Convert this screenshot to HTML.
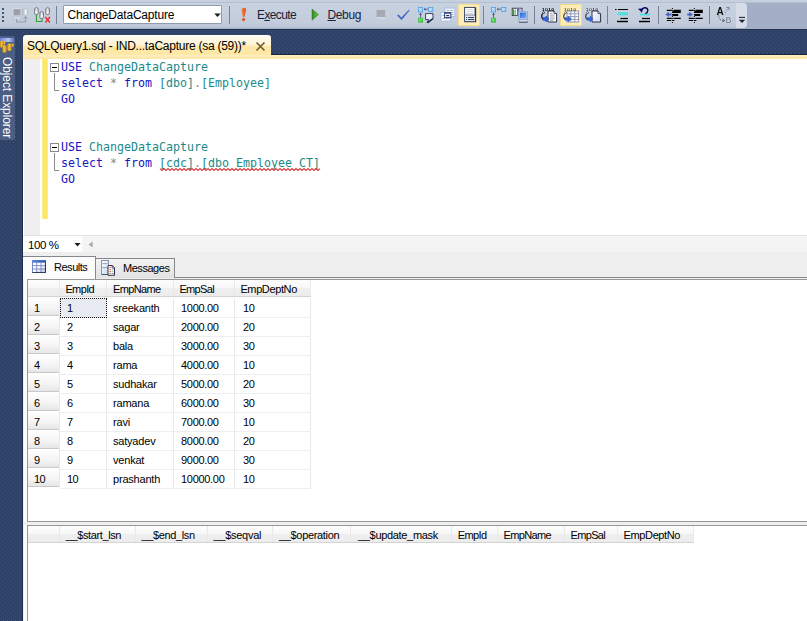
<!DOCTYPE html>
<html>
<head>
<meta charset="utf-8">
<title>SQLQuery1.sql</title>
<style>
html,body{margin:0;padding:0;}
body{width:807px;height:621px;overflow:hidden;position:relative;background:#fff;font-family:"Liberation Sans",sans-serif;font-size:12px;color:#000;}
.abs{position:absolute;}
#shelf{left:0;top:0;width:807px;height:29px;background:#a2afc7;}
#shelftop{left:0;top:0;width:807px;height:3px;background:linear-gradient(#c6cfdd,#c6cfdd 66%,#b4bfd1 67%);}
#toolbar{left:0;top:3px;width:747px;height:25px;background:linear-gradient(#c9d2df,#c2ccdb 80%,#b7c2d4);border-radius:0 4px 4px 0;}
#overflow{left:736px;top:3px;width:11px;height:25px;background:#d7dde8;border-radius:0 4px 4px 0;}
#navy{left:0;top:29px;width:807px;height:592px;background:#2e4268;}
#oe{left:0;top:36px;width:15px;height:104px;background:#4b5e83;border-radius:0 2px 2px 0;}
#oetext{left:-43px;top:100px;letter-spacing:-0.1px;width:100px;height:14px;line-height:14px;color:#fff;font-size:12px;transform:rotate(90deg);white-space:nowrap;text-align:left;}
#doctab{left:23px;top:35px;width:248px;height:21px;border-radius:3px 3px 0 0;background:linear-gradient(#fffdf6,#fff3cf 50%,#ffe8a6 52%,#ffe8a6);}
#tabstrip{left:23px;top:55px;width:784px;height:4px;background:linear-gradient(#fdefc2,#fbe4a6);}
#editor{left:23px;top:59px;width:784px;height:176px;background:#fff;}
#margin{left:24px;top:59px;width:16px;height:176px;background:#efeff1;}
#chg{left:42px;top:59px;width:6px;height:160px;background:linear-gradient(90deg,#fdf0a0,#fce968 18%,#fce968 82%,#fdf0a0);}
.code{font-family:"DejaVu Sans Mono","Liberation Mono",monospace;font-size:11.63px;line-height:16px;white-space:pre;height:16px;left:61px;}
.kw{color:#1515c4;}.id{color:#1a8a8a;}.op{color:#8a8a8a;}
.sq{}
#zoombar{left:23px;top:235px;width:784px;height:17px;background:#f4f4f4;border-top:1px solid #e2e2e2;box-sizing:border-box;}
#zoomcombo{left:23px;top:236px;width:59px;height:16px;background:#fff;}
#lowbg{left:23px;top:252px;width:784px;height:369px;background:#efefef;}
.g{font-size:11px;line-height:13px;white-space:nowrap;letter-spacing:-0.3px;}

.tb{font-size:12px;line-height:14px;white-space:nowrap;color:#1b2236;}
.sep{width:1px;height:18px;top:6px;background:#8591a8;box-shadow:1px 0 0 #d6dde9;}
.hl{background:#fdedb9;border:1px solid #f6da92;box-sizing:border-box;border-radius:1px;}
#combo{left:63px;top:5px;width:159px;height:19px;background:#fff;border:1px solid #909bb0;box-sizing:border-box;border-radius:1px;}
.rtab{box-sizing:border-box;border:1px solid #85878c;border-bottom:none;}
.grid{background:#fff;}
.hdr{background:#f5f5f5;}
.vl{width:1px;background:#e9e9e9;}
.hln{height:1px;background:#eeeeee;}
.hc{background:linear-gradient(#fdfdfd,#f7f7f7 50%,#efefef 51%,#ececec);}
.rh{background:linear-gradient(#fefefe,#f4f4f4 60%,#e6e6e6);border-bottom:1px solid #c9c9c9;box-sizing:content-box;height:17px !important;}
</style>
</head>
<body>
<div id="shelf" class="abs"></div>
<div id="shelftop" class="abs"></div>
<div id="toolbar" class="abs"></div>
<div id="overflow" class="abs"></div>
<div id="navy" class="abs"></div>
<svg class="abs" style="left:0;top:29px" width="807" height="592"><defs><pattern id="dots" width="4" height="4" patternUnits="userSpaceOnUse"><rect width="4" height="4" fill="#2e4268"/><rect x="1" y="1" width="1" height="1" fill="#3e537d"/><rect x="3" y="3" width="1" height="1" fill="#3e537d"/></pattern></defs><rect width="807" height="592" fill="url(#dots)"/><rect width="807" height="1" fill="#22314f"/><rect x="271" y="25" width="536" height="1" fill="#1c2437"/><rect x="22" y="30" width="1" height="562" fill="#1f2c47"/></svg>
<div id="oe" class="abs"></div>
<svg class="abs" style="left:0;top:36px" width="16" height="20" viewBox="0 0 16 20">
<defs><linearGradient id="gbar" x1="0" y1="0" x2="1" y2="0"><stop offset="0" stop-color="#6a82da"/><stop offset="0.6" stop-color="#b6c6f0"/><stop offset="1" stop-color="#5c6ed0"/></linearGradient>
<linearGradient id="ggold" x1="0" y1="0" x2="1" y2="0"><stop offset="0" stop-color="#c88a14"/><stop offset="0.5" stop-color="#f2c04a"/><stop offset="1" stop-color="#c48612"/></linearGradient></defs>
<rect x="0" y="2" width="14" height="4" fill="url(#gbar)"/>
<rect x="3.4" y="5" width="1.8" height="3.4" rx="0.6" fill="#e8c25a"/>
<rect x="11.4" y="7.4" width="2.2" height="3.4" rx="0.7" fill="#e8b840"/>
<rect x="0" y="4.8" width="3.4" height="6.6" rx="1" fill="url(#ggold)"/>
<rect x="7.2" y="7.6" width="4.4" height="7.2" rx="1.2" fill="url(#ggold)"/>
<rect x="2.4" y="9.2" width="4.2" height="7.4" rx="1.2" fill="url(#ggold)"/>
</svg>
<div id="oetext" class="abs">Object Explorer</div>
<div id="doctab" class="abs"></div>
<div id="tabstrip" class="abs"></div>
<div id="editor" class="abs"></div>
<div id="margin" class="abs"></div>
<div id="chg" class="abs"></div>
<div id="zoombar" class="abs"></div>
<div id="zoomcombo" class="abs"></div>
<div id="lowbg" class="abs"></div>
<div id="combo" class="abs"></div>
<div class="abs tb" style="left:67.5px;top:8px;letter-spacing:-0.2px;color:#000;">ChangeDataCapture</div>
<svg class="abs" style="left:214px;top:13px" width="7" height="4"><path d="M0.3 0.6 L6.7 0.6 L3.5 3.9 Z" fill="#1b1b1b"/></svg>
<div class="abs tb" style="left:257px;top:8px;letter-spacing:-0.63px;" id="t_exec">E<u>x</u>ecute</div>
<div class="abs tb" style="left:327.5px;top:8px;letter-spacing:-0.38px;" id="t_debug"><u>D</u>ebug</div>
<div class="abs hl" style="left:458px;top:4px;width:22px;height:22px;"></div>
<div class="abs hl" style="left:560px;top:4px;width:22px;height:22px;"></div>
<svg class="abs" style="left:0;top:0;will-change:transform" width="807" height="29" viewBox="0 0 807 29">
<defs>
<linearGradient id="gb" x1="0" y1="0" x2="1" y2="1"><stop offset="0" stop-color="#d6ecff"/><stop offset="1" stop-color="#8cc4f4"/></linearGradient>
<linearGradient id="gg" x1="0" y1="0" x2="1" y2="1"><stop offset="0" stop-color="#8cf08c"/><stop offset="1" stop-color="#38c838"/></linearGradient>
<linearGradient id="gex" x1="0" y1="0" x2="1" y2="0"><stop offset="0" stop-color="#f39a6a"/><stop offset="0.5" stop-color="#ea6a30"/><stop offset="1" stop-color="#d8501c"/></linearGradient>
<linearGradient id="gplay" x1="0" y1="0" x2="1" y2="0"><stop offset="0" stop-color="#2e8a1e"/><stop offset="1" stop-color="#6cc84c"/></linearGradient>
<linearGradient id="gmon" x1="0" y1="0" x2="1" y2="1"><stop offset="0" stop-color="#2a62d6"/><stop offset="1" stop-color="#6ab0f6"/></linearGradient>
<linearGradient id="gdoc" x1="0" y1="0" x2="1" y2="1"><stop offset="0" stop-color="#ffffff"/><stop offset="1" stop-color="#cfdcf2"/></linearGradient>
<g id="cyl"><path d="M0.4 1.5 Q0.4 0.4 2.1 0.4 Q3.8 0.4 3.8 1.5 V6 Q3.8 7.1 2.1 7.1 Q0.4 7.1 0.4 6 Z" fill="#fff" stroke="#50525e" stroke-width="0.8"/><path d="M0.8 2.4 Q2.1 3.2 3.4 2.4" fill="none" stroke="#9a9caa" stroke-width="0.7"/></g>
<g id="plan">
 <rect x="0.4" y="0.4" width="4.2" height="4.6" fill="url(#gb)" stroke="#4f9ee6" stroke-width="0.8"/>
 <rect x="10.6" y="0.4" width="4.2" height="4" fill="url(#gb)" stroke="#4f9ee6" stroke-width="0.8"/>
 <rect x="0.4" y="11.2" width="4.2" height="4" fill="url(#gg)" stroke="#3cbc3c" stroke-width="0.8"/>
 <path d="M6.2 2.2 H10 M6.2 2.2 l1.3 -1.2 M6.2 2.2 l1.3 1.2" stroke="#343e68" stroke-width="0.75" fill="none"/>
 <path d="M2.5 10.6 V6.4 M2.5 6.4 l-1.3 1.4 M2.5 6.4 l1.3 1.4" stroke="#343e68" stroke-width="0.75" fill="none"/>
</g>
<g id="arrow1010">
 <text x="1" y="3.5" font-family="Liberation Sans, sans-serif" font-size="4.4" fill="#000" letter-spacing="0.75">1010</text>
 <circle cx="2.6" cy="5.4" r="0.9" fill="#fff" stroke="#222" stroke-width="0.6"/>
 <path d="M1.6 6.4 Q-0.6 10 2.6 12.6" fill="none" stroke="#2a3050" stroke-width="1.1"/>
 <path d="M2 10.4 L5 10.6 L5 8.8 L8.2 11.8 L5 14.8 L5 13 L2.6 13.2 Q1.2 12 2 10.4 Z" fill="#3565d8" stroke="#2450b8" stroke-width="0.4"/>
</g>
<g id="indent">
 <path d="M1 2.4 H6 M7.6 2.4 H15" stroke="#000" stroke-width="1.1"/>
 <path d="M6.6 4 H15" stroke="#000" stroke-width="2.1"/>
 <path d="M6.6 7 H12.4" stroke="#000" stroke-width="2"/>
 <path d="M1 10.4 H6 M7.6 10.4 H15" stroke="#000" stroke-width="1.1"/>
 <path d="M1 12.5 H5.4 M7 12.5 H8.6" stroke="#000" stroke-width="1.1"/>
 <path d="M6.6 0 V15" stroke="#000" stroke-width="1" stroke-dasharray="1 1"/>
</g>
</defs>
<!-- grip -->
<g fill="#4a566e"><rect x="2" y="8" width="2" height="2"/><rect x="2" y="12" width="2" height="2"/><rect x="2" y="16" width="2" height="2"/><rect x="2" y="20" width="2" height="2"/></g>
<!-- icon A: connect (disabled) -->
<g>
 <rect x="12.8" y="8.5" width="8.4" height="7.6" fill="#aeb3be" stroke="#d5d9e1" stroke-width="1"/>
 <rect x="14" y="9.6" width="6" height="5.2" fill="#999eaa"/>
 <rect x="13" y="17" width="8.4" height="2" fill="#e4e7ec" stroke="#a9afbb" stroke-width="0.6"/>
 <path d="M16.5 19.4 V22 H25.6 V17" fill="none" stroke="#8f98a9" stroke-width="1"/>
 <path d="M23.6 18.6 L25.6 16.4 L27.6 18.6" fill="none" stroke="#8f98a9" stroke-width="1"/>
 <path d="M24 9.6 Q24 8.6 25.7 8.6 Q27.4 8.6 27.4 9.6 V14.4 Q27.4 15.4 25.7 15.4 Q24 15.4 24 14.4 Z" fill="#eef0f4" stroke="#a9afbb" stroke-width="0.8"/>
 <path d="M22.2 8.4 V16" stroke="#a9afbb" stroke-width="0.8"/>
</g>
<!-- icon B: change connection -->
<g>
 <path d="M36.4 14.6 V21.5 H42 V18.6" fill="none" stroke="#2fa02f" stroke-width="1.1"/>
 <use href="#cyl" x="34.3" y="7.4"/>
 <use href="#cyl" x="39.6" y="11.4"/>
 <use href="#cyl" x="45.5" y="7.4"/>
 <path d="M45.4 17 L49.8 22.6 M49.8 17 L45.4 22.6" stroke="#ea2a2a" stroke-width="1.4"/>
</g>
<!-- separators -->
<g stroke="#76829a" stroke-width="1"><path d="M56.5 6 V24"/><path d="M229.5 6 V24"/><path d="M483.5 6 V24"/><path d="M534.5 6 V24"/><path d="M607.5 6 V24"/><path d="M658.5 6 V24"/><path d="M709.5 6 V24"/></g>
<!-- ! icon -->
<path d="M241.3 10 Q241.2 7.8 243.6 7.8 Q246.2 7.8 246 10 L244.6 16.4 Q244.4 17 243.7 17 Q243 17 242.8 16.4 Z" fill="url(#gex)"/>
<ellipse cx="243.6" cy="19.6" rx="1.7" ry="1.6" fill="#e05a24"/>
<!-- play -->
<path d="M312 9 L318.6 14.6 L312 20.2 Z" fill="url(#gplay)" stroke="#2a7a1a" stroke-width="0.5"/>
<!-- stop -->
<rect x="376.6" y="10" width="8.6" height="7.4" fill="#a6a9ae"/><rect x="376.6" y="17.4" width="8.6" height="1" fill="#e2e6ee"/>
<!-- check -->
<path d="M397 15.4 L398.6 14.4 L401.4 17.4 L408.8 9.8 L409.6 10.4 L401.6 20 Z" fill="#4167c6"/>
<!-- icon1 est plan -->
<use href="#plan" x="418" y="7"/>
<path d="M425.6 13.6 H433 V18.6 L429 22.6 L427 22.6 L428.6 19.6 H425.6 Z" fill="url(#gdoc)" stroke="#28304e" stroke-width="0.9" stroke-linejoin="round"/>
<path d="M427.4 22.4 L433 18.6" stroke="#28304e" stroke-width="1.3"/>
<!-- icon2 query options -->
<g>
 <rect x="445" y="8" width="9.8" height="8.4" fill="#fff" stroke="#a6bce6" stroke-width="0.9"/>
 <path d="M445 8.6 H454.8" stroke="#c4d4f2" stroke-width="1.2"/>
 <path d="M446.6 10.5 H449.2 M450.4 10.5 H453.4 M451.4 12.5 H453.6 M451.4 14.5 H453.6" stroke="#9aa2b8" stroke-width="0.9"/>
 <rect x="441" y="12.4" width="9.8" height="8.6" fill="#fff" stroke="#a6bce6" stroke-width="0.9"/>
 <path d="M442.4 15.5 H444 M442.4 18.5 H444.8 M445.8 18.5 H449.6" stroke="#9aa2b8" stroke-width="0.9"/>
 <rect x="444.6" y="12.6" width="6.2" height="5" fill="#fff" stroke="#34447a" stroke-width="1.1"/>
 <path d="M444.6 13.4 H450.8" stroke="#4a68b0" stroke-width="1.1"/>
 <path d="M446.2 15.6 H449.2" stroke="#1e2640" stroke-width="1.2"/>
</g>
<!-- icon3 -->
<g>
 <rect x="464.6" y="7.4" width="10.6" height="14" fill="#fff" stroke="#3a4560" stroke-width="1"/>
 <path d="M475.5 7.4 V21.6 H464.6" fill="none" stroke="#2c3650" stroke-width="1.4"/>
 <path d="M466.4 9.6 H473.4 M466.4 11.6 H473.4 M466.4 13.4 H473.4" stroke="#c8ccd6" stroke-width="0.8"/>
 <rect x="465.2" y="15.4" width="9.6" height="5.8" fill="#dfe5f4"/>
 <path d="M464.6 15 H475" stroke="#5a6580" stroke-width="0.8"/>
 <path d="M468 17.5 H474 M468 19.5 H474" stroke="#34405c" stroke-width="1"/>
 <path d="M466 17.5 H467 M466 19.5 H467" stroke="#34405c" stroke-width="1"/>
</g>
<!-- icon4 actual plan -->
<use href="#plan" x="491" y="7"/>
<!-- icon5 client stats -->
<g>
 <rect x="512.2" y="8.2" width="9.8" height="7.4" fill="#fff" stroke="#1e2430" stroke-width="0.8"/>
 <rect x="512.6" y="9.4" width="1.5" height="6" fill="#2f9a2f"/><rect x="514.6" y="9.4" width="1.2" height="6" fill="#57c257"/>
 <rect x="517" y="8.6" width="2" height="7" fill="#6a62c8"/>
 <path d="M519.6 8.4 V12 M521 8.4 V12 M519 10 H522" stroke="#8a8eb0" stroke-width="0.5"/>
 <rect x="518.6" y="11.4" width="8.8" height="7.8" fill="#b9cbea" stroke="#8aa4d8" stroke-width="0.8"/>
 <rect x="519.8" y="12.6" width="6.4" height="5.4" fill="url(#gmon)"/>
 <rect x="519" y="20" width="8.4" height="2" fill="#f4f6fa" stroke="#8a96b4" stroke-width="0.6"/>
 <path d="M519 22.2 H527.6" stroke="#2e3c68" stroke-width="0.9"/>
</g>
<!-- icon6 results to text -->
<use href="#arrow1010" x="541" y="7.2"/>
<g>
 <path d="M548 11 H554 L556.6 13.6 V22 H548 Z" fill="#fff" stroke="#2a3048" stroke-width="1"/>
 <path d="M554 11 V13.6 H556.6" fill="#dfe4ee" stroke="#2a3048" stroke-width="0.8"/>
 <path d="M550 13.4 H552.6 M550 15.2 H554.6 M550 17 H554.6 M550 18.8 H554.6 M550 20.4 H553.4" stroke="#8a8e9a" stroke-width="0.8"/>
</g>
<use href="#arrow1010" x="541" y="7.2"/>
<!-- icon7 results to grid -->
<g>
 <rect x="567" y="11" width="11.6" height="11" fill="#fff" stroke="#8a8eae" stroke-width="0.9"/>
 <path d="M570.8 11 V22 M574.8 11 V22 M567 13.8 H578.6 M567 16.6 H578.6 M567 19.4 H578.6" stroke="#8a8eae" stroke-width="0.9"/>
</g>
<use href="#arrow1010" x="563" y="7.2"/>
<!-- icon8 results to file -->
<g>
 <path d="M592 11 H598 L600.6 13.6 V22 H592 Z" fill="url(#gdoc)" stroke="#2a3048" stroke-width="1"/>
 <path d="M598 11 V13.6 H600.6" fill="#dfe4ee" stroke="#2a3048" stroke-width="0.8"/>
</g>
<use href="#arrow1010" x="585" y="7.2"/>
<!-- icon9 comment -->
<g>
 <path d="M615 9.5 H616.6 M618 9.5 H628" stroke="#000" stroke-width="1.2"/>
 <rect x="617.8" y="12.2" width="10.2" height="3" fill="#48e0e0"/>
 <path d="M620.4 18.5 H628" stroke="#000" stroke-width="1.2"/>
 <path d="M617 21.5 H628" stroke="#000" stroke-width="1.5"/>
</g>
<!-- icon10 uncomment -->
<g>
 <rect x="640" y="13.8" width="10" height="1.6" fill="#48e0e0"/>
 <path d="M641.6 10.4 Q642.6 7.8 645 7.8 Q647.8 7.8 647.8 10.6 Q647.8 12.8 645.4 13.6" fill="none" stroke="#0a0a66" stroke-width="1.4"/>
 <path d="M638 8.8 L642.6 8.6 L642 12.8 Z" fill="#0a0a66"/>
 <path d="M642 18.5 H650" stroke="#000" stroke-width="1.2"/>
 <path d="M639 21.5 H650" stroke="#000" stroke-width="1.5"/>
</g>
<!-- icon11 decrease indent -->
<use href="#indent" x="665.8" y="8"/>
<path d="M665.2 14.4 L669 11.8 L669 13.4 L671.6 13.4 L671.6 15.4 L669 15.4 L669 17 Z" fill="#4a68c4"/>
<!-- icon12 increase indent -->
<use href="#indent" x="687.8" y="8"/>
<path d="M693 14.4 L689.2 11.8 L689.2 13.4 L687.2 13.4 L687.2 15.4 L689.2 15.4 L689.2 17 Z" fill="#4a68c4"/>
<!-- icon13 A->B -->
<g>
 <text x="716.4" y="14.8" font-family="Liberation Sans, sans-serif" font-size="10" font-weight="bold" fill="#111">A</text>
 <rect x="725.4" y="16" width="6" height="7" fill="#d3dae6"/>
 <text x="725.4" y="22.8" font-family="Liberation Sans, sans-serif" font-size="9" fill="#6e7380">B</text>
 <path d="M718.6 15.4 Q719 20.6 723.4 20.6" fill="none" stroke="#39415e" stroke-width="1" stroke-dasharray="1 1.2"/>
 <path d="M722.6 19.2 L724.6 20.6 L722.6 22" fill="none" stroke="#39415e" stroke-width="0.9"/>
 <path d="M725 13 L728.4 8" fill="none" stroke="#6674a0" stroke-width="1" stroke-dasharray="1 1.2"/>
 <path d="M726.4 7.4 H729 V10" fill="none" stroke="#6674a0" stroke-width="0.9"/>
</g>
<!-- overflow -->
<path d="M739 17.4 H745" stroke="#1e2636" stroke-width="1.1"/>
<path d="M738.8 19.8 H745.2 L742 23 Z" fill="#1e2636"/>
</svg>
<div class="abs tb" style="left:27px;top:39px;color:#000;letter-spacing:-0.25px;" id="t_tab">SQLQuery1.sql - IND...taCapture (sa (59))*</div>
<svg class="abs" style="left:255px;top:41px" width="11" height="11"><path d="M1.5 1.5 L9.5 9.5 M9.5 1.5 L1.5 9.5" stroke="#6b5a2e" stroke-width="1.6" fill="none"/></svg>
<div class="abs code" style="top:59px"><span class="kw">USE</span> <span class="id">ChangeDataCapture</span></div>
<div class="abs code" style="top:75px"><span class="kw">select</span> <span class="op">*</span> <span class="kw">from</span> <span class="id">[dbo]</span><span class="op">.</span><span class="id">[Employee]</span></div>
<div class="abs code" style="top:91px"><span class="kw">GO</span></div>
<div class="abs code" style="top:139px"><span class="kw">USE</span> <span class="id">ChangeDataCapture</span></div>
<div class="abs code" style="top:155px"><span class="kw">select</span> <span class="op">*</span> <span class="kw">from</span> <span class="id sq">[cdc]</span><span class="op">.</span><span class="id sq">[dbo_Employee_CT]</span></div>
<div class="abs code" style="top:171px"><span class="kw">GO</span></div>
<svg class="abs" style="left:50px;top:63px" width="10" height="30"><rect x="0.5" y="0.5" width="8" height="8" fill="#fff" stroke="#8a8a8a"/><path d="M2 4.5 H7" stroke="#000" stroke-width="1"/><path d="M4.5 10 V27.5 H9" stroke="#8a8a8a" fill="none"/></svg>
<svg class="abs" style="left:50px;top:143px" width="10" height="30"><rect x="0.5" y="0.5" width="8" height="8" fill="#fff" stroke="#8a8a8a"/><path d="M2 4.5 H7" stroke="#000" stroke-width="1"/><path d="M4.5 10 V27.5 H9" stroke="#8a8a8a" fill="none"/></svg>
<svg class="abs" style="left:0;top:0" width="807" height="200"><polyline points="160.0 168.6 162.0 170.4 164.0 168.6 166.0 170.4 168.0 168.6 170.0 170.4 172.0 168.6 174.0 170.4 176.0 168.6 178.0 170.4 180.0 168.6 182.0 170.4 184.0 168.6 186.0 170.4 188.0 168.6 190.0 170.4 192.0 168.6 194.0 170.4 196.0 168.6 198.0 170.4 200.0 168.6 202.0 170.4 204.0 168.6 206.0 170.4 208.0 168.6 210.0 170.4 212.0 168.6 214.0 170.4 216.0 168.6 218.0 170.4 220.0 168.6 222.0 170.4 224.0 168.6 226.0 170.4 228.0 168.6 230.0 170.4 232.0 168.6 234.0 170.4 236.0 168.6 238.0 170.4 240.0 168.6 242.0 170.4 244.0 168.6 246.0 170.4 248.0 168.6 250.0 170.4 252.0 168.6 254.0 170.4 256.0 168.6 258.0 170.4 260.0 168.6 262.0 170.4 264.0 168.6 266.0 170.4 268.0 168.6 270.0 170.4 272.0 168.6 274.0 170.4 276.0 168.6 278.0 170.4 280.0 168.6 282.0 170.4 284.0 168.6 286.0 170.4 288.0 168.6 290.0 170.4 292.0 168.6 294.0 170.4 296.0 168.6 298.0 170.4 300.0 168.6 302.0 170.4 304.0 168.6 306.0 170.4 308.0 168.6 310.0 170.4 312.0 168.6 314.0 170.4 316.0 168.6 318.0 170.4 320.0 168.6" fill="none" stroke="#e03c3c" stroke-width="1.15"/></svg>
<div class="abs tb" style="left:28px;top:238px;font-size:11.5px;letter-spacing:-0.38px;color:#000;" id="t_zoom">100 %</div>
<svg class="abs" style="left:74px;top:243px" width="7" height="4"><path d="M0.4 0 L6.6 0 L3.5 3.4 Z" fill="#1b1b1b"/></svg>
<svg class="abs" style="left:88px;top:241px" width="5" height="7"><path d="M4.6 0.4 L4.6 6.6 L0.6 3.5 Z" fill="#a8a8a8"/></svg>
<div class="abs" style="left:95px;top:277px;width:712px;height:1px;background:#85878c;"></div>
<div class="abs rtab" style="left:95px;top:258px;width:80px;height:20px;background:linear-gradient(#f3f3f3,#e2e2e2);"></div>
<div class="abs rtab" style="left:23px;top:256px;width:73px;height:23px;background:#fcfcfc;border-left:none;"></div>
<div class="abs g" style="left:54px;top:261px;letter-spacing:-0.47px;" id="t_res">Results</div>
<div class="abs g" style="left:123px;top:262px;letter-spacing:-0.46px;" id="t_msg">Messages</div>
<svg class="abs" style="left:32px;top:260px" width="14" height="13" viewBox="0 0 14 13">
<defs><linearGradient id="gri" x1="0" y1="0" x2="1" y2="0"><stop offset="0" stop-color="#5a88e0"/><stop offset="1" stop-color="#2a4eb4"/></linearGradient>
<linearGradient id="grc" x1="0" y1="0" x2="1" y2="1"><stop offset="0.5" stop-color="#ffffff"/><stop offset="1" stop-color="#b8bce8"/></linearGradient></defs>
<rect x="0.5" y="0.5" width="13" height="12" fill="url(#grc)" stroke="#7288cc" stroke-width="1"/>
<rect x="0.3" y="0.3" width="13.4" height="2.4" fill="url(#gri)"/>
<path d="M0.5 5.6 H13.5 M0.5 9 H13.5 M4.7 2.6 V12.4 M9 2.6 V12.4" stroke="#7886bc" stroke-width="0.9"/>
<path d="M13.5 2.6 V12.6 H0.4" fill="none" stroke="#2a3152" stroke-width="1"/>
</svg>
<svg class="abs" style="left:101px;top:260px" width="15" height="16" viewBox="0 0 15 16">
<defs><linearGradient id="gms" x1="0" y1="0" x2="1" y2="1"><stop offset="0" stop-color="#ffffff"/><stop offset="1" stop-color="#c4d8f0"/></linearGradient></defs>
<rect x="0.5" y="0.5" width="7" height="14" fill="url(#gms)" stroke="#8794ac" stroke-width="1"/>
<path d="M1.4 3.6 H6.6 M1.4 7.6 H6.6" stroke="#8e9bb0" stroke-width="0.9"/>
<path d="M1 14.5 H7.6" stroke="#4a5870" stroke-width="1"/>
<path d="M7 5.5 H11.4 L13.5 7.8 V15.3 H7 Z" fill="#fff" stroke="#342e4c" stroke-width="1"/>
<path d="M11.2 5.6 V8 H13.4" fill="none" stroke="#342e4c" stroke-width="0.8"/>
<path d="M8.4 7.6 H10.2" stroke="#e06a5a" stroke-width="1"/>
<path d="M8.4 9.6 H10.2" stroke="#e8803a" stroke-width="1"/>
<path d="M8.4 11.6 H10.2" stroke="#e06a3a" stroke-width="1"/>
<path d="M8.4 13.6 H10.2" stroke="#a08a30" stroke-width="1"/>
<path d="M11.4 9.6 H12.4 M11.4 11.6 H12.4" stroke="#4aa070" stroke-width="1"/>
<path d="M11.4 13.6 H12.4" stroke="#303858" stroke-width="1"/>
</svg>
<div class="abs" style="left:24px;top:279px;width:783px;height:342px;background:#fbfbfb;"></div>
<div class="abs" style="left:27px;top:279px;width:780px;height:243px;background:#fff;border-left:1px solid #979797;border-top:1px solid #979797;border-bottom:1px solid #979797;box-sizing:border-box;"></div>
<div class="abs" style="left:24px;top:522px;width:783px;height:3px;background:#f0f0f0;"></div>
<div class="abs hc" style="left:28px;top:280px;width:31px;height:16px;"></div>
<div class="abs vl" style="left:59px;top:280px;height:208px;"></div>
<div class="abs hc" style="left:60px;top:280px;width:46px;height:16px;"></div>
<div class="abs vl" style="left:106px;top:280px;height:208px;"></div>
<div class="abs hc" style="left:107px;top:280px;width:66px;height:16px;"></div>
<div class="abs vl" style="left:173px;top:280px;height:208px;"></div>
<div class="abs hc" style="left:174px;top:280px;width:60px;height:16px;"></div>
<div class="abs vl" style="left:234px;top:280px;height:208px;"></div>
<div class="abs hc" style="left:235px;top:280px;width:75px;height:16px;"></div>
<div class="abs vl" style="left:310px;top:280px;height:208px;"></div>
<div class="abs" style="left:28px;top:296px;width:283px;height:1px;background:#d4d4d4;"></div>
<div class="abs" style="left:28px;top:297px;width:283px;height:2px;background:#fbfbfb;"></div>
<div class="abs rh" style="left:28px;top:298px;width:31px;height:18px;"></div>
<div class="abs hln" style="left:60px;top:317px;width:251px;"></div>
<div class="abs rh" style="left:28px;top:317px;width:31px;height:18px;"></div>
<div class="abs hln" style="left:60px;top:336px;width:251px;"></div>
<div class="abs rh" style="left:28px;top:336px;width:31px;height:18px;"></div>
<div class="abs hln" style="left:60px;top:355px;width:251px;"></div>
<div class="abs rh" style="left:28px;top:355px;width:31px;height:18px;"></div>
<div class="abs hln" style="left:60px;top:374px;width:251px;"></div>
<div class="abs rh" style="left:28px;top:374px;width:31px;height:18px;"></div>
<div class="abs hln" style="left:60px;top:393px;width:251px;"></div>
<div class="abs rh" style="left:28px;top:393px;width:31px;height:18px;"></div>
<div class="abs hln" style="left:60px;top:412px;width:251px;"></div>
<div class="abs rh" style="left:28px;top:412px;width:31px;height:18px;"></div>
<div class="abs hln" style="left:60px;top:431px;width:251px;"></div>
<div class="abs rh" style="left:28px;top:431px;width:31px;height:18px;"></div>
<div class="abs hln" style="left:60px;top:450px;width:251px;"></div>
<div class="abs rh" style="left:28px;top:450px;width:31px;height:18px;"></div>
<div class="abs hln" style="left:60px;top:469px;width:251px;"></div>
<div class="abs rh" style="left:28px;top:469px;width:31px;height:18px;"></div>
<div class="abs hln" style="left:60px;top:488px;width:251px;"></div>
<div class="abs" style="left:60px;top:298px;width:47px;height:20px;background:#e8ebf1;border:1px dotted #111;box-sizing:border-box;"></div>
<div class="abs g" style="left:65.4px;top:283px;letter-spacing:-0.62px;">EmpId</div>
<div class="abs g" style="left:113px;top:283px;letter-spacing:-0.62px;">EmpName</div>
<div class="abs g" style="left:179.4px;top:283px;letter-spacing:-0.65px;">EmpSal</div>
<div class="abs g" style="left:240.4px;top:283px;letter-spacing:-0.38px;">EmpDeptNo</div>
<div class="abs g" style="left:34px;top:302px;letter-spacing:-0.5px;">1</div>
<div class="abs g" style="left:67px;top:302px;letter-spacing:-0.5px;">1</div>
<div class="abs g" style="left:113px;top:302px;letter-spacing:-0.2px;">sreekanth</div>
<div class="abs g" style="left:181px;top:302px;">1000.00</div>
<div class="abs g" style="left:243px;top:302px;">10</div>
<div class="abs g" style="left:34px;top:321px;letter-spacing:-0.5px;">2</div>
<div class="abs g" style="left:67px;top:321px;letter-spacing:-0.5px;">2</div>
<div class="abs g" style="left:113px;top:321px;letter-spacing:-0.2px;">sagar</div>
<div class="abs g" style="left:181px;top:321px;">2000.00</div>
<div class="abs g" style="left:243px;top:321px;">20</div>
<div class="abs g" style="left:34px;top:340px;letter-spacing:-0.5px;">3</div>
<div class="abs g" style="left:67px;top:340px;letter-spacing:-0.5px;">3</div>
<div class="abs g" style="left:113px;top:340px;letter-spacing:-0.2px;">bala</div>
<div class="abs g" style="left:181px;top:340px;">3000.00</div>
<div class="abs g" style="left:243px;top:340px;">30</div>
<div class="abs g" style="left:34px;top:359px;letter-spacing:-0.5px;">4</div>
<div class="abs g" style="left:67px;top:359px;letter-spacing:-0.5px;">4</div>
<div class="abs g" style="left:113px;top:359px;letter-spacing:-0.2px;">rama</div>
<div class="abs g" style="left:181px;top:359px;">4000.00</div>
<div class="abs g" style="left:243px;top:359px;">10</div>
<div class="abs g" style="left:34px;top:378px;letter-spacing:-0.5px;">5</div>
<div class="abs g" style="left:67px;top:378px;letter-spacing:-0.5px;">5</div>
<div class="abs g" style="left:113px;top:378px;letter-spacing:-0.2px;">sudhakar</div>
<div class="abs g" style="left:181px;top:378px;">5000.00</div>
<div class="abs g" style="left:243px;top:378px;">20</div>
<div class="abs g" style="left:34px;top:397px;letter-spacing:-0.5px;">6</div>
<div class="abs g" style="left:67px;top:397px;letter-spacing:-0.5px;">6</div>
<div class="abs g" style="left:113px;top:397px;letter-spacing:-0.2px;">ramana</div>
<div class="abs g" style="left:181px;top:397px;">6000.00</div>
<div class="abs g" style="left:243px;top:397px;">30</div>
<div class="abs g" style="left:34px;top:416px;letter-spacing:-0.5px;">7</div>
<div class="abs g" style="left:67px;top:416px;letter-spacing:-0.5px;">7</div>
<div class="abs g" style="left:113px;top:416px;letter-spacing:-0.2px;">ravi</div>
<div class="abs g" style="left:181px;top:416px;">7000.00</div>
<div class="abs g" style="left:243px;top:416px;">10</div>
<div class="abs g" style="left:34px;top:435px;letter-spacing:-0.5px;">8</div>
<div class="abs g" style="left:67px;top:435px;letter-spacing:-0.5px;">8</div>
<div class="abs g" style="left:113px;top:435px;letter-spacing:-0.2px;">satyadev</div>
<div class="abs g" style="left:181px;top:435px;">8000.00</div>
<div class="abs g" style="left:243px;top:435px;">20</div>
<div class="abs g" style="left:34px;top:454px;letter-spacing:-0.5px;">9</div>
<div class="abs g" style="left:67px;top:454px;letter-spacing:-0.5px;">9</div>
<div class="abs g" style="left:113px;top:454px;letter-spacing:-0.2px;">venkat</div>
<div class="abs g" style="left:181px;top:454px;">9000.00</div>
<div class="abs g" style="left:243px;top:454px;">30</div>
<div class="abs g" style="left:34px;top:473px;letter-spacing:-0.5px;">10</div>
<div class="abs g" style="left:67px;top:473px;letter-spacing:-0.5px;">10</div>
<div class="abs g" style="left:113px;top:473px;letter-spacing:-0.2px;">prashanth</div>
<div class="abs g" style="left:181px;top:473px;">10000.00</div>
<div class="abs g" style="left:243px;top:473px;">10</div>
<div class="abs" style="left:27px;top:525px;width:780px;height:96px;background:#fff;border-left:1px solid #979797;border-top:1px solid #979797;box-sizing:border-box;"></div>
<div class="abs hc" style="left:28px;top:526px;width:31px;height:16px;"></div>
<div class="abs vl" style="left:59px;top:526px;height:16px;"></div>
<div class="abs hc" style="left:60px;top:526px;width:75px;height:16px;"></div>
<div class="abs vl" style="left:135px;top:526px;height:16px;"></div>
<div class="abs hc" style="left:136px;top:526px;width:71px;height:16px;"></div>
<div class="abs vl" style="left:207px;top:526px;height:16px;"></div>
<div class="abs hc" style="left:208px;top:526px;width:64px;height:16px;"></div>
<div class="abs vl" style="left:272px;top:526px;height:16px;"></div>
<div class="abs hc" style="left:273px;top:526px;width:77px;height:16px;"></div>
<div class="abs vl" style="left:350px;top:526px;height:16px;"></div>
<div class="abs hc" style="left:351px;top:526px;width:100px;height:16px;"></div>
<div class="abs vl" style="left:451px;top:526px;height:16px;"></div>
<div class="abs hc" style="left:452px;top:526px;width:45px;height:16px;"></div>
<div class="abs vl" style="left:497px;top:526px;height:16px;"></div>
<div class="abs hc" style="left:498px;top:526px;width:66px;height:16px;"></div>
<div class="abs vl" style="left:564px;top:526px;height:16px;"></div>
<div class="abs hc" style="left:565px;top:526px;width:52px;height:16px;"></div>
<div class="abs vl" style="left:617px;top:526px;height:16px;"></div>
<div class="abs hc" style="left:618px;top:526px;width:75px;height:16px;"></div>
<div class="abs vl" style="left:693px;top:526px;height:16px;"></div>
<div class="abs" style="left:28px;top:542px;width:666px;height:1px;background:#d4d4d4;"></div>
<div class="abs g" style="left:65.8px;top:529px;letter-spacing:-0.39px;">__$start_lsn</div>
<div class="abs g" style="left:141.4px;top:529px;letter-spacing:-0.36px;">__$end_lsn</div>
<div class="abs g" style="left:213.5px;top:529px;letter-spacing:-0.27px;">__$seqval</div>
<div class="abs g" style="left:279px;top:529px;letter-spacing:-0.33px;">__$operation</div>
<div class="abs g" style="left:358px;top:529px;letter-spacing:-0.32px;">__$update_mask</div>
<div class="abs g" style="left:457.7px;top:529px;letter-spacing:-0.62px;">EmpId</div>
<div class="abs g" style="left:503.5px;top:529px;letter-spacing:-0.62px;">EmpName</div>
<div class="abs g" style="left:570.5px;top:529px;letter-spacing:-0.65px;">EmpSal</div>
<div class="abs g" style="left:623.6px;top:529px;letter-spacing:-0.38px;">EmpDeptNo</div>
</body>
</html>
